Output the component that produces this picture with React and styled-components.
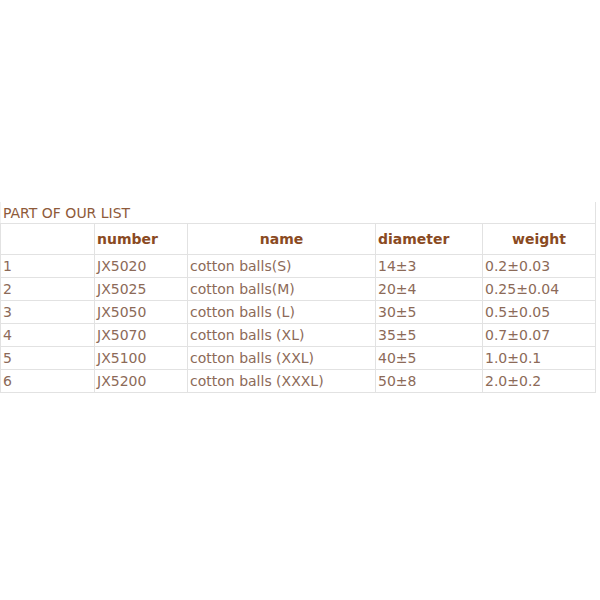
import React from 'react';
import styled, {createGlobalStyle} from 'styled-components';

const rows = [
    ['1', 'JX5020', 'cotton balls(S)', '14±3', '0.2±0.03'],
    ['2', 'JX5025', 'cotton balls(M)', '20±4', '0.25±0.04'],
    ['3', 'JX5050', 'cotton balls (L)', '30±5', '0.5±0.05'],
    ['4', 'JX5070', 'cotton balls (XL)', '35±5', '0.7±0.07'],
    ['5', 'JX5100', 'cotton balls (XXL)', '40±5', '1.0±0.1'],
    ['6', 'JX5200', 'cotton balls (XXXL)', '50±8', '2.0±0.2'],
];

const App = () => {
    return (
        <Page>
            <GlobalStyle/>
            <Table>
                <colgroup>
                    <col width="94"/>
                    <col width="93"/>
                    <col width="188"/>
                    <col width="107"/>
                    <col width="113"/>
                </colgroup>
                <tbody>
                <tr>
                    <Caption colSpan={5}>PART OF OUR LIST</Caption>
                </tr>
                <tr>
                    <Head/>
                    <Head align="left">number</Head>
                    <Head>name</Head>
                    <Head align="left">diameter</Head>
                    <Head>weight</Head>
                </tr>
                {
                    rows.map((row, index) => (
                        <tr key={index}>
                            {row.map((cell, i) => <Cell key={i}>{cell}</Cell>)}
                        </tr>
                    ))
                }
                </tbody>
            </Table>
        </Page>
    )
}

const GlobalStyle = createGlobalStyle`
  body {
    margin: 0;
    background: #fff;
    font-family: "DejaVu Sans", Verdana, sans-serif;
  }
`;

const Page = styled.div`
  width: 600px;
  height: 600px;
  padding-top: 202px;
  box-sizing: border-box;
`;

const Table = styled.table`
  border-collapse: collapse;
  table-layout: fixed;
  width: 596px;
  font-size: 14px;

  td, th {
    border: 1px solid #e2e2e2;
  }
`;

const Caption = styled.td`
  height: 21px;
  padding: 0 2px;
  font-size: 14px;
  color: #8e5a3a;
  border-top: none !important;
  border-left-color: #f0f0f0 !important;
`;

const Head = styled.th`
  height: 30px;
  padding: 0 2px;
  text-align: ${p => p.align || 'center'};
  font-weight: bold;
  font-size: 14px;
  color: #8a4a22;
`;

const Cell = styled.td`
  height: 22px;
  padding: 0 2px;
  color: #8c6a58;
`;

export default App;
